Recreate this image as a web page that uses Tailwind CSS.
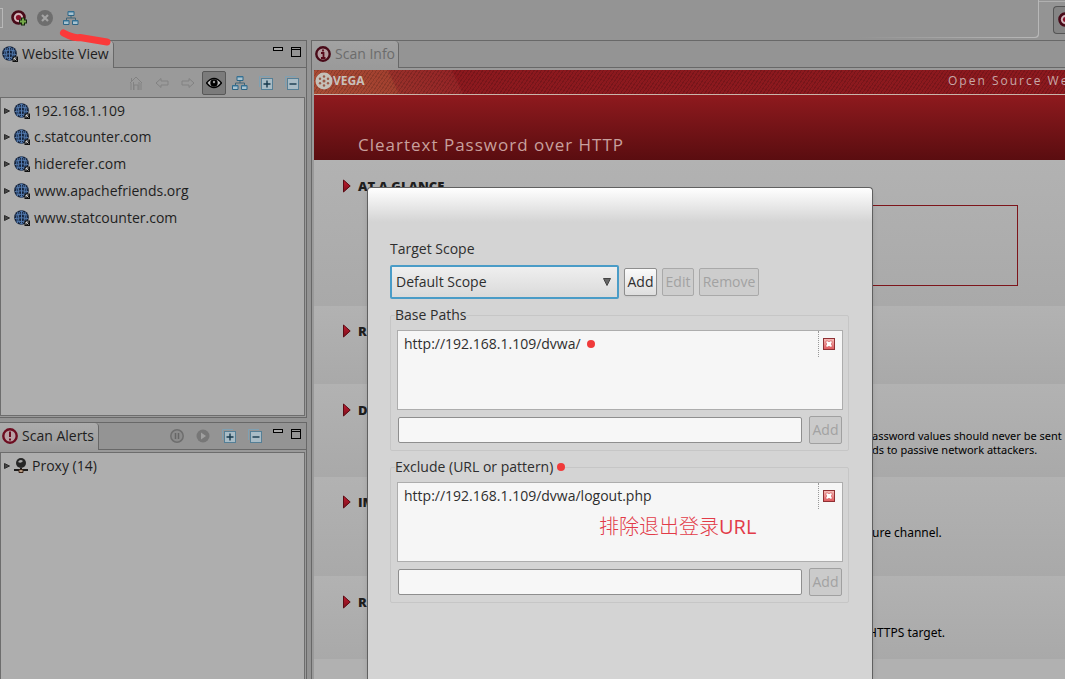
<!DOCTYPE html>
<html lang="en">
<head>
<meta charset="utf-8">
<title>Vega</title>
<script src="https://cdn.jsdelivr.net/npm/@tailwindcss/browser@4"></script>
</head>
<body class="relative flex h-screen flex-col overflow-hidden bg-[#949494] font-['Open_Sans','Noto_Sans_CJK_SC',sans-serif] text-sm text-[#1e1e1e]">
<svg class="absolute h-0 w-0" aria-hidden="true">
  <defs>
    <linearGradient id="arrowfill" x1="0" y1="0" x2="0" y2="1"><stop offset="0" stop-color="#c01c30"/><stop offset="1" stop-color="#7c0f1c"/></linearGradient>
    <linearGradient id="delfill" x1="0" y1="0" x2="0" y2="1"><stop offset="0" stop-color="#f7c0bc"/><stop offset="1" stop-color="#e0585c"/></linearGradient>
  </defs>
  <symbol id="globe" viewBox="0 0 16 16">
    <circle cx="7.5" cy="7.5" r="7.3" fill="#14223a"/>
    <g fill="none" stroke="#5279ad" stroke-width="1"><ellipse cx="7.5" cy="7.5" rx="3" ry="6.5"/><path d="M1.5 5Q7.500 3 13.500 5M1 8.500Q7.500 7 14 8.500M2.500 12Q7.500 10.500 12 12M7.500 1v13M4 2Q1.500 7 3.500 13M11 2Q13.500 7 11.500 13"/></g>
    <rect x="10.500" y="10.500" width="5.500" height="5.500" fill="#111"/><path d="M12 14.500v-2.500h2.500M12 12l2.500 2.500" stroke="#ddd" stroke-width=".9" fill="none"/>
  </symbol>
  <symbol id="sitemap" viewBox="0 0 16 16">
    <g fill="#a9c3d0" stroke="#2d6585"><path d="M5 1.500h6v4h-6zM.5 10.500h5.500v4h-5.500zM9.500 10.500h5.500v4h-5.500z"/></g>
    <path d="M5 2h6M.5 11h5.500M9.500 11h5.500" stroke="#3c7ca0"/><path d="M8 6v2M3.500 10V8h9v2" fill="none" stroke="#3f6477"/>
  </symbol>
  <symbol id="plus" viewBox="0 0 14 14"><path d="M.5 11V.5H11" fill="none" stroke="#7fa0b2"/><rect x="2.500" y="2.500" width="11" height="11" fill="#a9bcc6" stroke="#557f96"/><path d="M8 4.500v7M4.500 8h7" stroke="#16384c" stroke-width="1.400"/></symbol>
  <symbol id="minus" viewBox="0 0 14 14"><path d="M.5 11V.5H11" fill="none" stroke="#7fa0b2"/><rect x="2.500" y="2.500" width="11" height="11" fill="#a9bcc6" stroke="#557f96"/><path d="M4.500 8h7" stroke="#16384c" stroke-width="1.400"/></symbol>
  <symbol id="min" viewBox="0 0 10 10"><rect x=".5" y=".5" width="9" height="3" fill="#aaa" stroke="#000"/></symbol>
  <symbol id="max" viewBox="0 0 10 10"><rect x=".5" y=".5" width="9" height="9" fill="none" stroke="#000"/><path d="M0 2.500h10" stroke="#000"/></symbol>
  <symbol id="tri" viewBox="0 0 6 6"><path d="M.5 .5L5.500 3L.5 5.500z" fill="#444" stroke="#2c2c2c"/></symbol>
  <symbol id="marker" viewBox="0 0 8 14"><path d="M.5 1L7.200 7L.5 13z" fill="url(#arrowfill)" stroke="#5b0b14"/></symbol>
  <symbol id="back" viewBox="0 0 14 12"><path d="M1 6L6 1.500V4h7v4H6v2.500z" fill="#9a9a9a" stroke="#828282"/></symbol>
  <symbol id="delete" viewBox="0 0 12 12"><rect x=".5" y=".5" width="11" height="11" fill="url(#delfill)" stroke="#8f3034"/><path d="M3 3h2l1 1 1-1h2v2L8 6l1 1v2H7L6 8 5 9H3V7l1-1-1-1z" fill="#fff" stroke="#d2585a" stroke-width=".6"/></symbol>
  <symbol id="target" viewBox="0 0 16 16"><circle cx="7.500" cy="7.500" r="6" fill="#c4a0a8" stroke="#480a18" stroke-width="2.600"/><circle cx="7.500" cy="7.500" r="3.600" fill="none" stroke="#d5bcc1"/><circle cx="7.500" cy="7.500" r="2.600" fill="#860e27"/></symbol>
</svg>

<header class="flex h-10 shrink-0 items-start">
  <div class="mt-2 h-5 w-[3px] border-y border-r border-[#b8b8b8]"></div>
  <nav class="flex gap-2.5 pt-2.5 pl-2" aria-label="Main tools">
    <button aria-label="Start new scan" class="h-4 w-4"><svg class="h-4 w-4"><use href="#target"/><path d="M12 7.500v8M8 11.500h8" stroke="#14270f" stroke-width="4"/><path d="M12 8.500v6M9 11.500h6" stroke="#76aa49" stroke-width="2"/></svg></button>
    <button aria-label="Stop scan" class="h-4 w-4"><svg viewBox="0 0 16 16" class="h-4 w-4"><circle cx="8" cy="8" r="8" fill="#6e6e6e"/><path d="M5 5l6 6M11 5l-6 6" stroke="#a4a4a4" stroke-width="2.200"/></svg></button>
    <button aria-label="Edit target scopes" class="h-4 w-4"><svg class="h-4 w-4"><use href="#sitemap"/></svg></button>
  </nav>
  <div class="ml-auto h-[38px] w-[180px] rounded-br-sm bg-linear-to-r from-transparent to-[#b8b8b8]"><div class="mr-px h-[37px] rounded-br-sm bg-[#949494]"></div></div>
  <div class="mt-px flex h-9 w-[26px] justify-end overflow-hidden border-t border-[#b0b0b0]">
    <button aria-label="Scanner" class="mt-1 flex h-7 w-3 shrink-0 items-center overflow-hidden rounded-l-sm border-y border-l border-[#555] bg-[#858585] pl-1"><svg class="h-4 w-4 shrink-0"><use href="#target"/></svg></button>
  </div>
</header>

<div class="flex min-h-0 flex-1 gap-1">
  <aside class="flex w-[307px] shrink-0 flex-col gap-1">
    <section class="flex h-[378px] flex-col border-y border-r border-[#686868] bg-[#9a9a9a] pb-px">
      <div class="flex h-[27px] shrink-0">
        <h2 class="flex items-center gap-1 rounded-tr-sm border-r border-[#686868] bg-linear-to-b from-[#acacac] to-[#9c9c9c] pr-1 pb-0.5 pl-0.5 whitespace-nowrap"><svg class="h-4 w-4"><use href="#globe"/></svg>Website View</h2>
        <div class="flex flex-1 justify-end gap-2 border-b border-[#686868] bg-[#949494] pt-1.5 pr-[5px]">
          <button aria-label="Minimize" class="h-2.5 w-2.5"><svg class="h-2.5 w-2.5"><use href="#min"/></svg></button>
          <button aria-label="Maximize" class="h-2.5 w-2.5"><svg class="h-2.5 w-2.5"><use href="#max"/></svg></button>
        </div>
      </div>
      <div class="flex h-[29px] shrink-0 items-center justify-end pr-px">
        <button aria-label="Home" class="flex w-[26px] justify-center"><svg viewBox="0 0 14 16" class="h-4 w-3.5"><path d="M2 15V8M1 8l6-6 6 6M12 15V8M5 15v-5h4v5M2.500 3v4M4.500 7v8M10 7v8" fill="none" stroke="#828282"/></svg></button>
        <button aria-label="Back" class="flex w-[26px] justify-center"><svg class="h-3 w-3.5"><use href="#back"/></svg></button>
        <button aria-label="Forward" class="flex w-[26px] justify-center"><svg class="h-3 w-3.5 -scale-x-100"><use href="#back"/></svg></button>
        <button aria-label="Show visited" class="mx-px flex h-6 w-6 items-center justify-center rounded-xs border border-[#585858] bg-[#7b7b7b]"><svg viewBox="0 0 16 12" class="h-3 w-4"><path d="M.5 6Q4 1.500 8 1.500T15.500 6Q12 10.500 8 10.500T.5 6z" fill="#bbb" stroke="#000" stroke-width="1.500"/><circle cx="8" cy="6" r="3.700"/><circle cx="8" cy="5" r="1.200" fill="#999"/></svg></button>
        <button aria-label="Scope" class="flex w-[26px] justify-center"><svg class="h-4 w-4"><use href="#sitemap"/></svg></button>
        <button aria-label="Expand all" class="flex w-[26px] justify-center"><svg class="h-3.5 w-3.5"><use href="#plus"/></svg></button>
        <button aria-label="Collapse all" class="flex w-[26px] justify-center"><svg class="h-3.5 w-3.5"><use href="#minus"/></svg></button>
      </div>
      <ul class="mr-px min-h-0 flex-1 border border-[#6d6d6d] bg-[#aeaeae] pl-[3px]">
        <li class="flex h-[25px] items-center gap-1"><svg class="h-1.5 w-1.5"><use href="#tri"/></svg><svg class="h-4 w-4"><use href="#globe"/></svg>192.168.1.109</li>
        <li class="flex h-[27px] items-center gap-1"><svg class="h-1.5 w-1.5"><use href="#tri"/></svg><svg class="h-4 w-4"><use href="#globe"/></svg>c.statcounter.com</li>
        <li class="flex h-[27px] items-center gap-1"><svg class="h-1.5 w-1.5"><use href="#tri"/></svg><svg class="h-4 w-4"><use href="#globe"/></svg>hiderefer.com</li>
        <li class="flex h-[27px] items-center gap-1"><svg class="h-1.5 w-1.5"><use href="#tri"/></svg><svg class="h-4 w-4"><use href="#globe"/></svg>www.apachefriends.org</li>
        <li class="flex h-[27px] items-center gap-1"><svg class="h-1.5 w-1.5"><use href="#tri"/></svg><svg class="h-4 w-4"><use href="#globe"/></svg>www.statcounter.com</li>
      </ul>
    </section>
    <section class="flex min-h-0 flex-1 flex-col border-t border-r border-[#686868] bg-[#9a9a9a]">
      <div class="flex h-[27px] shrink-0">
        <h2 class="flex items-center gap-1 rounded-tr-sm border-r border-[#686868] bg-linear-to-b from-[#acacac] to-[#9c9c9c] pr-1 pb-0.5 pl-0.5 whitespace-nowrap"><svg viewBox="0 0 16 16" class="h-4 w-4"><circle cx="8" cy="8" r="6.700" fill="#b9a0a5" stroke="#6d0c20" stroke-width="2.400"/><path d="M8 3.500v5.500M8 10.500v2" stroke="#6d0c20" stroke-width="2"/></svg>Scan Alerts</h2>
        <div class="flex flex-1 items-start justify-end gap-3 border-b border-[#686868] bg-[#949494] pt-1.5 pr-[5px]">
          <button aria-label="Pause" class="h-3.5 w-3.5"><svg viewBox="0 0 14 14" class="h-3.5 w-3.5"><circle cx="7" cy="7" r="6.200" fill="#8c8c8c" stroke="#6e6e6e" stroke-width="1.500"/><path d="M5.500 4v6M8.500 4v6" stroke="#666" stroke-width="1.500"/></svg></button>
          <button aria-label="Play" class="h-3.5 w-3.5"><svg viewBox="0 0 14 14" class="h-3.5 w-3.5"><circle cx="7" cy="7" r="6.500" fill="#777"/><path d="M5 3.500l5 3.500-5 3.500z" fill="#a0a0a0"/></svg></button>
          <button aria-label="Expand all" class="h-3.5 w-3.5"><svg class="h-3.5 w-3.5"><use href="#plus"/></svg></button>
          <button aria-label="Collapse all" class="h-3.5 w-3.5"><svg class="h-3.5 w-3.5"><use href="#minus"/></svg></button>
          <div class="-ml-px flex gap-2">
            <button aria-label="Minimize" class="h-2.5 w-2.5"><svg class="h-2.5 w-2.5"><use href="#min"/></svg></button>
            <button aria-label="Maximize" class="h-2.5 w-2.5"><svg class="h-2.5 w-2.5"><use href="#max"/></svg></button>
          </div>
        </div>
      </div>
      <ul class="mt-0.5 mr-px min-h-0 flex-1 border-x border-t border-[#6d6d6d] bg-[#aeaeae] pl-[3px]">
        <li class="flex h-[25px] items-center gap-1"><svg class="h-1.5 w-1.5"><use href="#tri"/></svg><svg viewBox="0 0 14 15" class="h-[15px] w-3.5"><circle cx="7" cy="5" r="5" fill="#262626"/><path d="M4 4Q6 .8 9 3Q7 6 4 4z" fill="#aaa"/><path d="M0 12h14M7 10v2" stroke="#1c1c1c" stroke-width="2"/><path d="M5 11.500h4v3h-4z" fill="#b89a80" stroke="#3a2418"/></svg>Proxy (14)</li>
      </ul>
    </section>
  </aside>

  <main class="flex min-w-0 flex-1 flex-col overflow-hidden border-t border-l border-[#686868] bg-[#9a9a9a] pl-0.5">
    <div class="-ml-0.5 flex h-[27px] shrink-0">
      <h2 class="flex items-center gap-1 rounded-tr-sm border-r border-[#686868] bg-linear-to-b from-[#a2a2a2] to-[#9a9a9a] pr-[3px] pb-0.5 pl-[3px] whitespace-nowrap text-[#6c6c6c]"><svg viewBox="0 0 16 16" class="h-4 w-4"><circle cx="8" cy="8" r="6.700" fill="#b49ba0" stroke="#480a18" stroke-width="2.400"/><path d="M6 7h2.500v5M6 12h4.500M8 3.500v2" stroke="#58091b" stroke-width="1.800" fill="none"/></svg>Scan Info</h2>
      <div class="flex-1 border-b border-[#686868] bg-[#949494]"></div>
    </div>
    <div class="mt-0.5 flex h-[25px] shrink-0 items-center overflow-hidden border-b border-[#c9b5ab] bg-[repeating-linear-gradient(125deg,#00000026_0_1px,transparent_1px_3px),linear-gradient(65deg,#a84c35_0,#a2402f_76px,#98302a_78px,#942426_134px,#8c191e_136px)] pb-[3px] text-[#c8c8c8]">
      <svg viewBox="0 0 18 18" class="ml-px h-[18px] w-[18px] shrink-0"><circle cx="9" cy="9" r="8.500" fill="#c4c0b8"/><g fill="#9a5a48"><circle cx="9" cy="9" r="1.500"/><circle cx="9" cy="4.500" r="1.200"/><circle cx="9" cy="13.500" r="1.200"/><circle cx="5" cy="6.700" r="1.200"/><circle cx="13" cy="6.700" r="1.200"/><circle cx="5" cy="11.300" r="1.200"/><circle cx="13" cy="11.300" r="1.200"/></g></svg>
      <span class="text-xs font-bold text-[#c9c1bb]">VEGA</span>
      <span class="ml-auto w-[117px] shrink-0 text-xs tracking-[2px] whitespace-nowrap text-[#c8a8a8]">Open Source Web</span>
    </div>
    <div class="flex h-[65px] shrink-0 items-end bg-linear-to-b from-[#8f1a1e] to-[#5a0d10] pb-px pl-11"><h1 class="text-[17px] leading-7 tracking-[1px] whitespace-nowrap text-[#c8a09e]">Cleartext Password over HTTP</h1></div>

    <section class="h-[146px] shrink-0 bg-linear-to-b from-[#b2b2b2] to-[#a9a9a9] pt-4 pl-[29px]">
      <h3 class="flex h-5 items-center gap-[7px] text-[13px] font-extrabold"><svg class="h-3.5 w-2"><use href="#marker"/></svg>AT A GLANCE</h3>
      <div class="mt-[9px] ml-[57px] h-[81px] w-[618px] border border-[#7d151b]"></div>
    </section>
    <section class="h-[78px] shrink-0 bg-linear-to-b from-[#b2b2b2] to-[#a9a9a9] pt-[15px] pl-[29px]">
      <h3 class="flex h-5 items-center gap-[7px] text-[13px] font-extrabold"><svg class="h-3.5 w-2"><use href="#marker"/></svg>REQUEST</h3>
    </section>
    <section class="h-[93px] shrink-0 bg-linear-to-b from-[#b2b2b2] to-[#a9a9a9] pt-4 pl-[29px]">
      <h3 class="flex h-5 items-center gap-[7px] text-[13px] font-extrabold"><svg class="h-3.5 w-2"><use href="#marker"/></svg>DISCUSSION</h3>
      <p class="mt-[9px] pl-[529px] font-['Noto_Sans',sans-serif] text-[11px] leading-[14px] whitespace-nowrap text-black">assword values should never be sent<br>ds to passive network attackers.</p>
    </section>
    <section class="h-[99px] shrink-0 bg-linear-to-b from-[#b2b2b2] to-[#a9a9a9] pt-[15px] pl-[29px]">
      <h3 class="flex h-5 items-center gap-[7px] text-[13px] font-extrabold"><svg class="h-3.5 w-2"><use href="#marker"/></svg>IMPACT</h3>
      <p class="mt-3.5 pl-[529px] font-['Noto_Sans',sans-serif] text-xs leading-[14px] whitespace-nowrap text-black">ure channel.</p>
    </section>
    <section class="h-[83px] shrink-0 bg-linear-to-b from-[#b2b2b2] to-[#a9a9a9] pt-4 pl-[29px]">
      <h3 class="flex h-5 items-center gap-[7px] text-[13px] font-extrabold"><svg class="h-3.5 w-2"><use href="#marker"/></svg>REMEDIATION</h3>
      <p class="mt-3.5 pl-[525px] font-['Noto_Sans',sans-serif] text-xs leading-[14px] whitespace-nowrap text-black">HTTPS target.</p>
    </section>
    <section class="min-h-5 flex-1 bg-[#b1b1b1]"></section>
  </main>
</div>

<!-- Target scope dialog -->
<div role="dialog" aria-label="Edit target scopes" class="absolute top-[187px] bottom-0 left-[367px] w-[506px] rounded-t-sm border-x border-t border-[#606060] bg-[#d4d4d4] bg-[linear-gradient(#fff,#d4d4d4_34px)] pt-[51px] pr-[23px] pl-[22px] text-[#2e2e2e] shadow-md">
  <label for="scope" class="block h-5 leading-5">Target Scope</label>
  <div class="mt-1.5 flex items-center gap-[5px]">
    <div class="relative w-[229px]">
      <select id="scope" class="h-[34px] w-full appearance-none rounded-xs border-2 border-[#4a9cc7] bg-linear-to-b from-[#efefef] to-[#dadada] pl-1 outline-none"><option>Default Scope</option></select>
      <svg viewBox="0 0 8 8" class="pointer-events-none absolute top-[13px] right-2 h-2 w-2"><path d="M.5 .5h7L4 7.500z" fill="#666" stroke="#444"/></svg>
    </div>
    <button class="h-7 w-[33px] rounded-xs border border-[#8e8e8e] bg-linear-to-b from-[#fafafa] to-[#dedede] shadow-xs">Add</button>
    <button disabled class="h-7 w-8 rounded-xs border border-[#a9a9a9] bg-[#cdcdcd] text-[#a2a2a2]">Edit</button>
    <button disabled class="h-7 w-[60px] rounded-xs border border-[#a9a9a9] bg-[#cdcdcd] text-[#a2a2a2]">Remove</button>
  </div>

  <fieldset class="mt-1.5 rounded-xs border border-[#c6c6c6] px-1.5 pb-1.5">
    <legend class="-ml-0.5 h-5 leading-5">Base Paths</legend>
    <ul class="mt-[5px] -mr-px h-20 border border-[#adadad] bg-[#f6f6f6] pl-1.5">
      <li class="flex h-[26px] items-center">http://192.168.1.109/dvwa/<span class="ml-1.5 h-2 w-2 rounded-full bg-[#f03a3a]"></span>
        <span class="ml-auto flex h-full items-center border-l border-dotted border-[#999] pr-[7px] pl-1"><button aria-label="Remove path" class="h-3 w-3"><svg class="h-3 w-3"><use href="#delete"/></svg></button></span></li>
    </ul>
    <div class="mt-1.5 flex items-center gap-[7px] pl-px">
      <input aria-label="Base path" class="h-[26px] min-w-0 flex-1 rounded-xs border border-[#8e8e8e] bg-[#f7f7f7] px-1">
      <button disabled class="h-7 w-[33px] rounded-xs border border-[#a0a0a0] bg-[#cbcbcb] text-[#a2a2a2]">Add</button>
    </div>
  </fieldset>

  <fieldset class="mt-1.5 rounded-xs border border-[#c6c6c6] px-1.5 pb-1.5">
    <legend class="-ml-0.5 flex h-5 items-center leading-5">Exclude (URL or pattern)<span class="ml-1 h-2 w-2 rounded-full bg-[#f03a3a]"></span></legend>
    <div class="relative mt-[5px]">
      <ul class="-mr-px h-20 border border-[#adadad] bg-[#f6f6f6] pl-1.5">
        <li class="flex h-[26px] items-center">http://192.168.1.109/dvwa/logout.php
          <span class="ml-auto flex h-full items-center border-l border-dotted border-[#999] pr-[7px] pl-1"><button aria-label="Remove exclusion" class="h-3 w-3"><svg class="h-3 w-3"><use href="#delete"/></svg></button></span></li>
      </ul>
      <p class="absolute top-[30px] left-[202px] text-xl leading-7 whitespace-nowrap text-[#e23b48]"><span class="font-['Noto_Sans_CJK_SC',sans-serif] font-light">排除退出登录</span>URL</p>
    </div>
    <div class="mt-1.5 flex items-center gap-[7px] pl-px">
      <input aria-label="Exclude pattern" class="h-[26px] min-w-0 flex-1 rounded-xs border border-[#8e8e8e] bg-[#f7f7f7] px-1">
      <button disabled class="h-7 w-[33px] rounded-xs border border-[#a0a0a0] bg-[#cbcbcb] text-[#a2a2a2]">Add</button>
    </div>
  </fieldset>
</div>

<svg viewBox="0 0 54 18" class="absolute top-[28px] left-[58px] h-[18px] w-[54px]" aria-hidden="true"><path d="M5.500 5Q11 8 15 9T22 9.500L49 14" fill="none" stroke="#fb3a3a" stroke-width="7" stroke-linecap="round" stroke-linejoin="round"/></svg>
</body>
</html>
